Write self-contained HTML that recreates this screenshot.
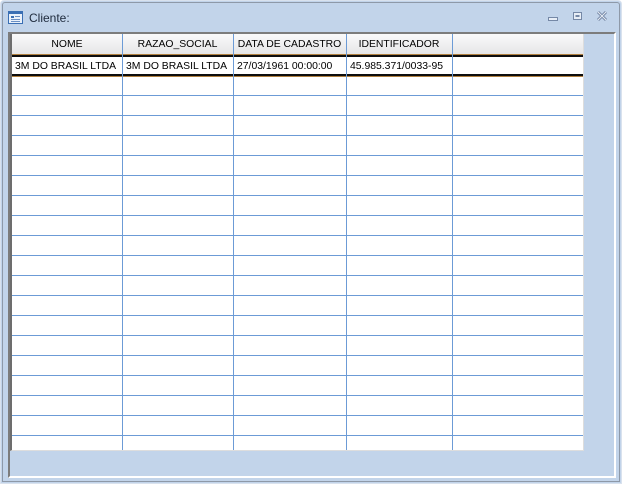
<!DOCTYPE html>
<html><head><meta charset="utf-8"><style>
*{margin:0;padding:0;box-sizing:border-box}
body{width:622px;height:484px;background:#fff;position:relative;overflow:hidden;font-family:"Liberation Sans",Tahoma,sans-serif;font-size:10.4px;color:#000}
.win{position:absolute;left:0;top:0;width:622px;height:484px;background:#c2d4ea;border:1px solid #d9e2ee;border-radius:4px 4px 0 0}
.wb{position:absolute;left:1px;top:1px;right:1px;bottom:1px;border:1px solid #8e99a8;border-radius:3px 3px 0 0}
.title{position:absolute;left:29px;top:11px;font-size:12px;color:#1e2a3c}
.frame{position:absolute;left:8px;top:32px;width:608px;height:446px;border-top:2px solid #7c7c7c;border-left:2px solid #7c7c7c;border-right:2px solid #fff;border-bottom:2px solid #fff}
.grid{position:absolute;left:10px;top:34px;width:574px;height:417px;background:#fff;border-left:2px solid #6d6d6d;border-right:1px solid #ddd;border-bottom:1px solid #ddd;overflow:hidden}
.hdr{position:absolute;left:0;top:0;width:572px;height:21px;background:linear-gradient(#fafafa,#e4e4e6)}
.c{position:absolute;top:0;height:21px;line-height:22px;text-align:center}
.d{position:absolute;top:23px;height:18px;line-height:19px;padding-left:3px;white-space:nowrap}
.vl{position:absolute;top:0;bottom:0;width:1px;background:#6c9bd6}
.hl{position:absolute;left:0;width:572px;height:1px;background:#6c9bd6}
.dbl{position:absolute;left:0;width:572px;height:3px}
.d1{border-top:1px solid #b08040;background:#0d0d0d}
.d2{border-bottom:1px solid #b08040;background:#0d0d0d}
</style></head><body>
<div class="win"><div class="wb"></div></div>
<svg style="position:absolute;left:8px;top:11px" width="15" height="13" viewBox="0 0 15 13">
<rect x="0.5" y="0.5" width="14" height="12" fill="#eaf1fa" stroke="#3a6fb4"/>
<rect x="1" y="1" width="13" height="2" fill="#3a6fb4"/>
<rect x="3" y="5" width="3" height="2" fill="#3a6fb4"/><rect x="7" y="5" width="5" height="1" fill="#6a8fc4"/>
<rect x="3" y="8" width="9" height="1" fill="#6a8fc4"/><rect x="3" y="10" width="9" height="1" fill="#6a8fc4"/>
</svg>
<div class="title">Cliente:</div>
<svg style="position:absolute;left:545px;top:9px" width="65" height="14" viewBox="0 0 65 14">
<rect x="3.5" y="8.5" width="9" height="3" fill="#e8eef6" stroke="#7588a6"/>
<rect x="28.5" y="3.5" width="8" height="7" fill="#e8eef6" stroke="#7588a6"/>
<rect x="30.5" y="6" width="4" height="2" fill="#7588a6"/>
<path d="M53 3 L61 11 M61 3 L53 11" stroke="#7588a6" stroke-width="3"/>
<path d="M53 3 L61 11 M61 3 L53 11" stroke="#e8eef6" stroke-width="0.9"/>
</svg>
<div class="frame"></div>
<div class="grid">
<div class="hdr"></div>
<div class="c" style="left:0;width:110px">NOME</div>
<div class="c" style="left:110px;width:111px">RAZAO_SOCIAL</div>
<div class="c" style="left:221px;width:113px">DATA DE CADASTRO</div>
<div class="c" style="left:334px;width:106px">IDENTIFICADOR</div>
<div class="dbl d1" style="top:20px"></div>
<div class="d" style="left:0">3M DO BRASIL LTDA</div>
<div class="d" style="left:111px">3M DO BRASIL LTDA</div>
<div class="d" style="left:222px">27/03/1961 00:00:00</div>
<div class="d" style="left:335px">45.985.371/0033-95</div>
<div class="dbl d2" style="top:40px"></div>
<div class="hl" style="top:61px"></div><div class="hl" style="top:81px"></div><div class="hl" style="top:101px"></div><div class="hl" style="top:121px"></div><div class="hl" style="top:141px"></div><div class="hl" style="top:161px"></div><div class="hl" style="top:181px"></div><div class="hl" style="top:201px"></div><div class="hl" style="top:221px"></div><div class="hl" style="top:241px"></div><div class="hl" style="top:261px"></div><div class="hl" style="top:281px"></div><div class="hl" style="top:301px"></div><div class="hl" style="top:321px"></div><div class="hl" style="top:341px"></div><div class="hl" style="top:361px"></div><div class="hl" style="top:381px"></div><div class="hl" style="top:401px"></div>
<div class="vl" style="left:110px"></div>
<div class="vl" style="left:221px"></div>
<div class="vl" style="left:334px"></div>
<div class="vl" style="left:440px"></div>
</div>
</body></html>
